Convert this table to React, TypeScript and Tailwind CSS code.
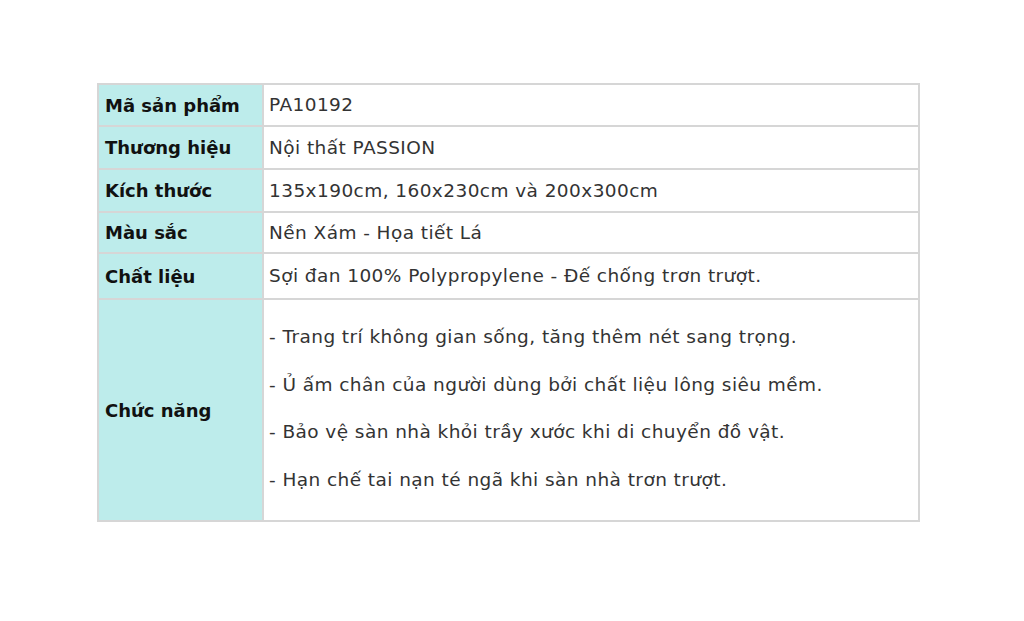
import React from "react";

const rows: [string, string][] = [
  ["Mã sản phẩm", "PA10192"],
  ["Thương hiệu", "Nội thất PASSION"],
  ["Kích thước", "135x190cm, 160x230cm và 200x300cm"],
  ["Màu sắc", "Nền Xám - Họa tiết Lá"],
  ["Chất liệu", "Sợi đan 100% Polypropylene - Đế chống trơn trượt."],
];
const heights = ["h-[42px]", "h-[43px]", "h-[43px]", "h-[41px]", "h-[46px]"];

const features = [
  "- Trang trí không gian sống, tăng thêm nét sang trọng.",
  "- Ủ ấm chân của người dùng bởi chất liệu lông siêu mềm.",
  "- Bảo vệ sàn nhà khỏi trầy xước khi di chuyển đồ vật.",
  "- Hạn chế tai nạn té ngã khi sàn nhà trơn trượt.",
];

export default function App() {
  return (
    <div className="w-[1024px] h-[621px] bg-white pt-[83px] pl-[97px] font-['DejaVu_Sans',sans-serif]">
      <table className="w-[823px] border-collapse border-2 border-[#d6d6d6] text-[18px]">
        <tbody>
          {rows.map(([k, v], i) => (
            <tr key={k} className={heights[i]}>
              <td className="w-[165px] border-2 border-[#d6d6d6] bg-[#bdeceb] pl-[6px] font-bold text-[#111]">
                {k}
              </td>
              <td className="border-2 border-[#d6d6d6] pl-[5px] text-[18.5px] tracking-[0.43px] text-[#333]">{v}</td>
            </tr>
          ))}
          <tr className="h-[222px]">
            <td className="w-[165px] border-2 border-[#d6d6d6] bg-[#bdeceb] pl-[6px] font-bold text-[#111]">
              Chức năng
            </td>
            <td className="border-2 border-[#d6d6d6] pl-[5px] text-[18.5px] tracking-[0.43px] text-[#333]">
              <div className="flex flex-col gap-[21px] pb-[3px]">
                {features.map((f) => (
                  <p key={f} className="leading-[26.5px]">{f}</p>
                ))}
              </div>
            </td>
          </tr>
        </tbody>
      </table>
    </div>
  );
}
